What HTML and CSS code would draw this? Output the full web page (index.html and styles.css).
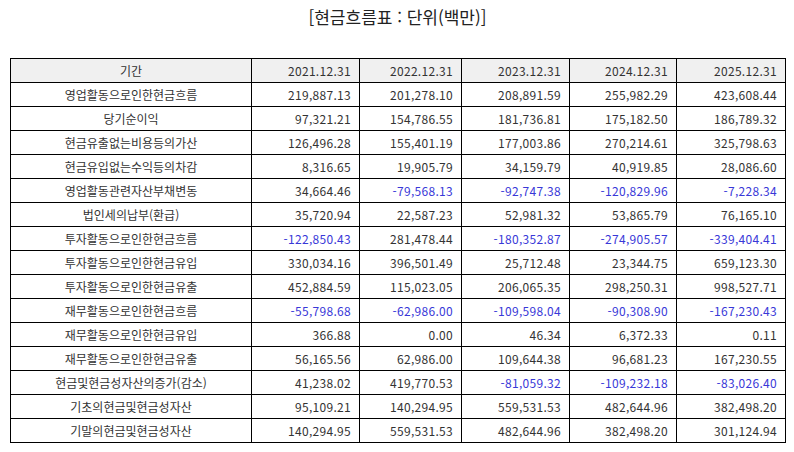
FILE: index.html
```html
<!DOCTYPE html>
<html lang="ko">
<head>
<meta charset="utf-8">
<link rel="stylesheet" href="styles.css">
</head>
<body>
<div class="page">
  <h1 class="title">[현금흐름표 : 단위(백만)]</h1>
  <table class="cf">
    <colgroup>
      <col class="c0"><col class="c1"><col class="c2"><col class="c3"><col class="c4"><col class="c5">
    </colgroup>
    <thead>
      <tr><th class="lbl">기간</th><th>2021.12.31</th><th>2022.12.31</th><th>2023.12.31</th><th>2024.12.31</th><th>2025.12.31</th></tr>
    </thead>
    <tbody>
      <tr><td class="lbl">영업활동으로인한현금흐름</td><td>219,887.13</td><td>201,278.10</td><td>208,891.59</td><td>255,982.29</td><td>423,608.44</td></tr>
      <tr><td class="lbl">당기순이익</td><td>97,321.21</td><td>154,786.55</td><td>181,736.81</td><td>175,182.50</td><td>186,789.32</td></tr>
      <tr><td class="lbl">현금유출없는비용등의가산</td><td>126,496.28</td><td>155,401.19</td><td>177,003.86</td><td>270,214.61</td><td>325,798.63</td></tr>
      <tr><td class="lbl">현금유입없는수익등의차감</td><td>8,316.65</td><td>19,905.79</td><td>34,159.79</td><td>40,919.85</td><td>28,086.60</td></tr>
      <tr><td class="lbl">영업활동관련자산부채변동</td><td>34,664.46</td><td class="neg">-79,568.13</td><td class="neg">-92,747.38</td><td class="neg">-120,829.96</td><td class="neg">-7,228.34</td></tr>
      <tr><td class="lbl">법인세의납부(환급)</td><td>35,720.94</td><td>22,587.23</td><td>52,981.32</td><td>53,865.79</td><td>76,165.10</td></tr>
      <tr><td class="lbl">투자활동으로인한현금흐름</td><td class="neg">-122,850.43</td><td>281,478.44</td><td class="neg">-180,352.87</td><td class="neg">-274,905.57</td><td class="neg">-339,404.41</td></tr>
      <tr><td class="lbl">투자활동으로인한현금유입</td><td>330,034.16</td><td>396,501.49</td><td>25,712.48</td><td>23,344.75</td><td>659,123.30</td></tr>
      <tr><td class="lbl">투자활동으로인한현금유출</td><td>452,884.59</td><td>115,023.05</td><td>206,065.35</td><td>298,250.31</td><td>998,527.71</td></tr>
      <tr><td class="lbl">재무활동으로인한현금흐름</td><td class="neg">-55,798.68</td><td class="neg">-62,986.00</td><td class="neg">-109,598.04</td><td class="neg">-90,308.90</td><td class="neg">-167,230.43</td></tr>
      <tr><td class="lbl">재무활동으로인한현금유입</td><td>366.88</td><td>0.00</td><td>46.34</td><td>6,372.33</td><td>0.11</td></tr>
      <tr><td class="lbl">재무활동으로인한현금유출</td><td>56,165.56</td><td>62,986.00</td><td>109,644.38</td><td>96,681.23</td><td>167,230.55</td></tr>
      <tr><td class="lbl">현금및현금성자산의증가(감소)</td><td>41,238.02</td><td>419,770.53</td><td class="neg">-81,059.32</td><td class="neg">-109,232.18</td><td class="neg">-83,026.40</td></tr>
      <tr><td class="lbl">기초의현금및현금성자산</td><td>95,109.21</td><td>140,294.95</td><td>559,531.53</td><td>482,644.96</td><td>382,498.20</td></tr>
      <tr><td class="lbl">기말의현금및현금성자산</td><td>140,294.95</td><td>559,531.53</td><td>482,644.96</td><td>382,498.20</td><td>301,124.94</td></tr>
    </tbody>
  </table>
</div>
</body>
</html>
```
FILE: styles.css
```css
html, body {
  margin: 0;
  padding: 0;
  background: #ffffff;
}
.page {
  padding: 0 0 0 10px;
  font-family: "Noto Sans CJK KR", "Noto Sans", sans-serif;
  color: #333333;
}
.title {
  margin: 0;
  height: 58px;
  padding-top: 5px;
  box-sizing: border-box;
  font-size: 17px;
  font-weight: 400;
  text-align: center;
  width: 775px;
  line-height: 24px;
  color: #222222;
}
.cf {
  border-collapse: collapse;
  table-layout: fixed;
  width: 775px;
  font-size: 12px;
}
.c0 { width: 241px; }
.c1 { width: 108px; }
.c2 { width: 102px; }
.c3 { width: 108px; }
.c4 { width: 107px; }
.c5 { width: 109px; }
.cf th, .cf td {
  border: 1px solid #000000;
  height: 24px;
  padding: 0 8px 0 4px;
  box-sizing: border-box;
  text-align: right;
  font-weight: 400;
  line-height: 14px;
  white-space: nowrap;
  letter-spacing: 0.3px;
  color: #333333;
}
.cf th {
  background: #f0f0f0;
}
.cf .lbl {
  text-align: center;
  padding: 0 4px;
  letter-spacing: 0;
}
.cf .neg {
  color: #3838d8;
}
```
